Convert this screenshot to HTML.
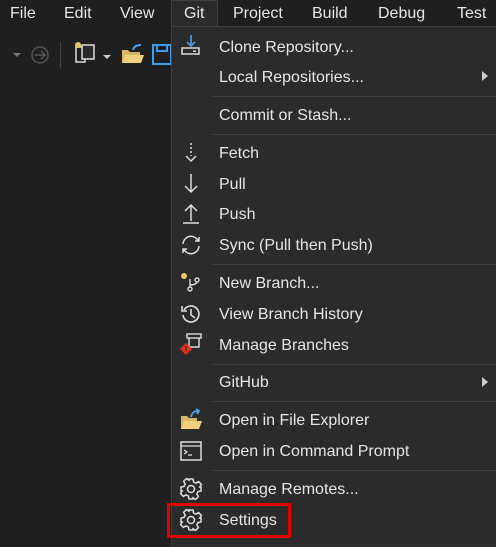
<!DOCTYPE html><html><head><style>
body{margin:0;width:496px;height:540px;background:#1f1f1f;overflow:hidden;position:relative;font-family:"Segoe UI","Liberation Sans",sans-serif;color:#e6e6e6;font-size:15.5px}
.mb{position:absolute;top:5px;font-size:16px}
.menu{position:absolute;left:171px;top:26px;width:330px;height:520px;background:#2b2b2b;border-left:1px solid #3f3f3f;border-top:1px solid #3f3f3f}
.git{position:absolute;left:171px;top:0;width:47px;height:27px;background:#2b2b2b;border:1px solid #3f3f3f;border-bottom:none;box-sizing:border-box}
.it{position:absolute;left:219px;font-size:16px;line-height:20px;margin-top:1px}
.sep{position:absolute;left:212px;width:290px;height:1px;background:#3d3d3d}
.ic{position:absolute;left:179px;width:24px;height:24px}
.arr{position:absolute;left:482px;width:0;height:0;border-left:6px solid #ccc;border-top:5px solid transparent;border-bottom:5px solid transparent}
</style></head><body>
<div class="git"></div>
<div class="mb" style="left:10px">File</div>
<div class="mb" style="left:64px">Edit</div>
<div class="mb" style="left:120px">View</div>
<div class="mb" style="left:184px">Git</div>
<div class="mb" style="left:233px">Project</div>
<div class="mb" style="left:312px">Build</div>
<div class="mb" style="left:378px">Debug</div>
<div class="mb" style="left:457px">Test</div>
<svg style="position:absolute;left:0;top:40px" width="171" height="30">
<path d="M13 13l4 4 4-4z" fill="#777"/>
<circle cx="40" cy="15" r="8" fill="none" stroke="#555" stroke-width="1.5"/><path d="M35 15h9M41 11l4 4-4 4" stroke="#555" fill="none" stroke-width="1.5"/>
<rect x="60" y="2" width="1" height="26" fill="#444"/>
<rect x="76" y="7" width="9" height="15" fill="none" stroke="#ddd" stroke-width="1.5"/><rect x="82" y="5" width="12" height="14" fill="#2b2b2b" stroke="#ddd" stroke-width="1.5"/>
<circle cx="78" cy="5" r="3" fill="#e8c66a"/>
<path d="M103 15l4 4 4-4z" fill="#ccc"/>
<path d="M122 10h6l2 2h10v11h-18z" fill="#d9b56a"/><path d="M122 23l3-8h19l-3 8z" fill="#f0cf7d"/><path d="M133 10c1-4 4-5 8-5" stroke="#4aa3ec" stroke-width="2" fill="none"/>
<rect x="153" y="5" width="18" height="19" fill="none" stroke="#3d9be9" stroke-width="2"/><rect x="157" y="5" width="10" height="6" fill="none" stroke="#3d9be9" stroke-width="2"/>
</svg>
<div class="menu"></div>
<svg class="ic" style="top:34px" viewBox="0 0 24 24"><path d="M12 1v11M8 8l4 4 4-4" stroke="#4aa3ec" stroke-width="1.6" fill="none"/><rect x="3" y="14" width="17" height="6" fill="none" stroke="#ddd" stroke-width="1.5"/><rect x="14" y="16.5" width="3" height="1.5" fill="#ddd"/></svg>
<div class="it" style="top:37px">Clone Repository...</div>
<div class="it" style="top:67px">Local Repositories...</div><div class="arr" style="top:71px"></div>
<div class="sep" style="top:96px"></div>
<div class="it" style="top:105px">Commit or Stash...</div>
<div class="sep" style="top:134px"></div>
<svg class="ic" style="top:141px" viewBox="0 0 24 24"><path d="M12 2v13" stroke="#ddd" stroke-width="1.5" stroke-dasharray="2 2" fill="none"/><path d="M7 15l5 5 5-5" stroke="#ddd" stroke-width="1.5" fill="none"/></svg>
<div class="it" style="top:143px">Fetch</div>
<svg class="ic" style="top:172px" viewBox="0 0 24 24"><path d="M12 2v18M6 14l6 6 6-6" stroke="#ddd" stroke-width="1.5" fill="none"/></svg>
<div class="it" style="top:174px">Pull</div>
<svg class="ic" style="top:202px" viewBox="0 0 24 24"><path d="M12 19V3M6 9l6-6 6 6M4 21h16" stroke="#ddd" stroke-width="1.5" fill="none"/></svg>
<div class="it" style="top:204px">Push</div>
<svg class="ic" style="top:233px" viewBox="0 0 24 24"><path d="M4 11a8 8 0 0 1 14-5l2 2M20 4v4h-4M20 13a8 8 0 0 1-14 5l-2-2M4 20v-4h4" stroke="#ddd" stroke-width="1.5" fill="none"/></svg>
<div class="it" style="top:235px">Sync (Pull then Push)</div>
<div class="sep" style="top:264px"></div>
<svg class="ic" style="top:271px" viewBox="0 0 24 24"><circle cx="5" cy="5" r="3" fill="#e8c66a"/><circle cx="11" cy="18" r="2" fill="none" stroke="#ddd" stroke-width="1.4"/><circle cx="18" cy="9" r="2" fill="none" stroke="#ddd" stroke-width="1.4"/><path d="M11 8v8M11 14c5 0 7-2 7-3" stroke="#ddd" stroke-width="1.4" fill="none"/></svg>
<div class="it" style="top:273px">New Branch...</div>
<svg class="ic" style="top:302px" viewBox="0 0 24 24"><path d="M5 8a8 8 0 1 1-1 5M3 4v5h5M12 7v6l4 3" stroke="#ddd" stroke-width="1.6" fill="none"/></svg>
<div class="it" style="top:304px">View Branch History</div>
<svg class="ic" style="top:332px" viewBox="0 0 24 24"><rect x="8" y="2" width="14" height="4" fill="none" stroke="#ddd" stroke-width="1.4"/><path d="M10 6v9h10V6" stroke="#ddd" stroke-width="1.4" fill="none"/><path d="M7 11l6 6-6 6-6-6z" fill="#e0301e"/><rect x="6.5" y="14" width="1" height="5" fill="#222"/></svg>
<div class="it" style="top:335px">Manage Branches</div>
<div class="sep" style="top:364px"></div>
<div class="it" style="top:372px">GitHub</div><div class="arr" style="top:377px"></div>
<div class="sep" style="top:401px"></div>
<svg class="ic" style="top:408px" viewBox="0 0 24 24"><path d="M2 8h6l2 2h8v11H2z" fill="#d9b56a"/><path d="M2 21l3-8h18l-3 8z" fill="#f0cf7d"/><path d="M12 9c1-5 4-6 8-6M17 1l3 2-2 3" stroke="#4aa3ec" stroke-width="1.8" fill="none"/></svg>
<div class="it" style="top:410px">Open in File Explorer</div>
<svg class="ic" style="top:439px" viewBox="0 0 24 24"><rect x="2" y="3" width="20" height="18" fill="none" stroke="#ddd" stroke-width="1.5"/><path d="M2 7h20M5 11l3 2-3 2M9 16h4" stroke="#ddd" stroke-width="1.3" fill="none"/></svg>
<div class="it" style="top:441px">Open in Command Prompt</div>
<div class="sep" style="top:470px"></div>
<svg class="ic" style="top:477px" viewBox="0 0 24 24"><g stroke="#ddd" stroke-width="1.5" fill="none"><circle cx="12" cy="12" r="3.5"/><path d="M10 2h4l.6 3 2.4 1.2 2.6-1.6 2.8 2.8-1.6 2.6L22 10v4l-3 .6-1.2 2.4 1.6 2.6-2.8 2.8-2.6-1.6L14 22h-4l-.6-3L7 17.8l-2.6 1.6-2.8-2.8L3.2 14 2 14v-4l3-.6L6.2 7 4.6 4.4 7.4 1.6 10 3.2z"/></g></svg>
<div class="it" style="top:479px">Manage Remotes...</div>
<svg class="ic" style="top:508px" viewBox="0 0 24 24"><g stroke="#ddd" stroke-width="1.5" fill="none"><circle cx="12" cy="12" r="3.5"/><path d="M10 2h4l.6 3 2.4 1.2 2.6-1.6 2.8 2.8-1.6 2.6L22 10v4l-3 .6-1.2 2.4 1.6 2.6-2.8 2.8-2.6-1.6L14 22h-4l-.6-3L7 17.8l-2.6 1.6-2.8-2.8L3.2 14 2 14v-4l3-.6L6.2 7 4.6 4.4 7.4 1.6 10 3.2z"/></g></svg>
<div class="it" style="top:510px">Settings</div>
<div style="position:absolute;left:167px;top:503px;width:118px;height:29px;border:3px solid #e00000"></div>
</body></html>
